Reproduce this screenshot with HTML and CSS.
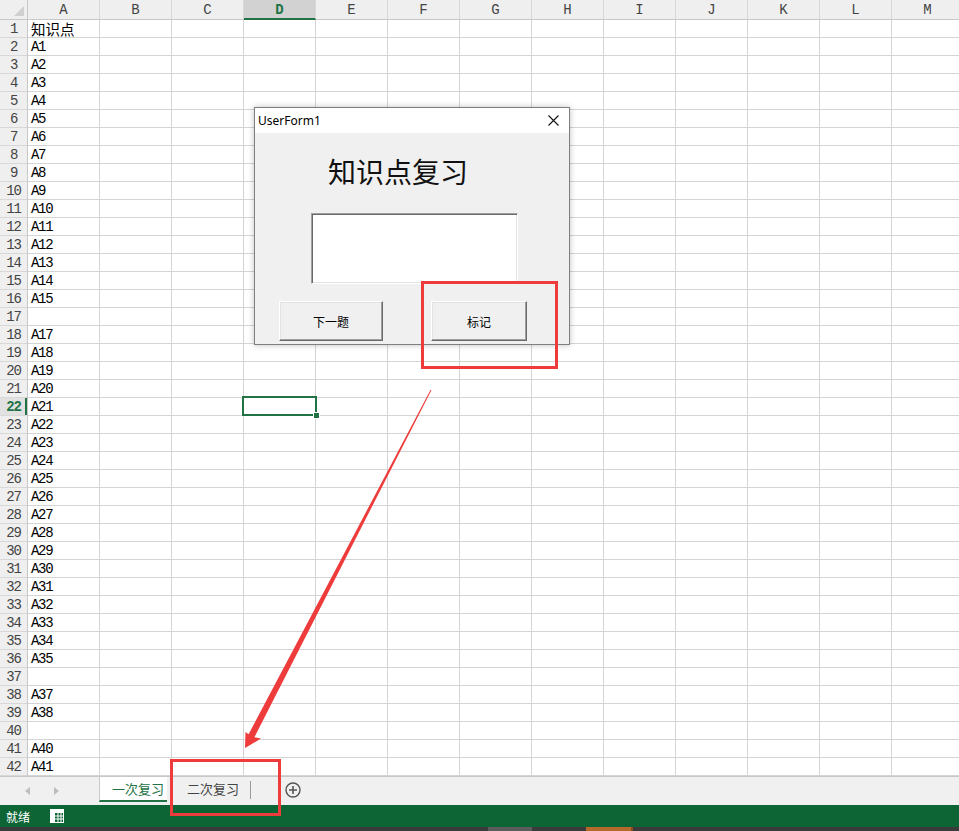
FILE: index.html
```html
<!DOCTYPE html>
<html lang="zh">
<head>
<meta charset="utf-8">
<title>Excel</title>
<link rel="stylesheet" href="styles.css">
</head>
<body>
<div class="sheet">
  <div class="corner"><span class="corner-tri"></span></div>
  <div class="colheads">
    <div class="colh">A</div><div class="colh">B</div><div class="colh">C</div><div class="colh colh-act">D</div><div class="colh">E</div><div class="colh">F</div><div class="colh">G</div><div class="colh">H</div><div class="colh">I</div><div class="colh">J</div><div class="colh">K</div><div class="colh">L</div><div class="colh">M</div>
  </div>
  <div class="rows">
    <div class="rowh">1</div><div class="rowh">2</div><div class="rowh">3</div><div class="rowh">4</div><div class="rowh">5</div><div class="rowh">6</div><div class="rowh">7</div><div class="rowh">8</div><div class="rowh">9</div><div class="rowh">10</div>
    <div class="rowh">11</div><div class="rowh">12</div><div class="rowh">13</div><div class="rowh">14</div><div class="rowh">15</div><div class="rowh">16</div><div class="rowh">17</div><div class="rowh">18</div><div class="rowh">19</div><div class="rowh">20</div>
    <div class="rowh">21</div><div class="rowh rowh-act">22</div><div class="rowh">23</div><div class="rowh">24</div><div class="rowh">25</div><div class="rowh">26</div><div class="rowh">27</div><div class="rowh">28</div><div class="rowh">29</div><div class="rowh">30</div>
    <div class="rowh">31</div><div class="rowh">32</div><div class="rowh">33</div><div class="rowh">34</div><div class="rowh">35</div><div class="rowh">36</div><div class="rowh">37</div><div class="rowh">38</div><div class="rowh">39</div><div class="rowh">40</div>
    <div class="rowh">41</div><div class="rowh">42</div>
  </div>
  <div class="grid">
    <div class="colA">
      <div class="cell cjk">知识点</div>
      <div class="cell">A1</div><div class="cell">A2</div><div class="cell">A3</div><div class="cell">A4</div><div class="cell">A5</div><div class="cell">A6</div><div class="cell">A7</div><div class="cell">A8</div><div class="cell">A9</div><div class="cell">A10</div>
      <div class="cell">A11</div><div class="cell">A12</div><div class="cell">A13</div><div class="cell">A14</div><div class="cell">A15</div><div class="cell"></div><div class="cell">A17</div><div class="cell">A18</div><div class="cell">A19</div><div class="cell">A20</div>
      <div class="cell">A21</div><div class="cell">A22</div><div class="cell">A23</div><div class="cell">A24</div><div class="cell">A25</div><div class="cell">A26</div><div class="cell">A27</div><div class="cell">A28</div><div class="cell">A29</div><div class="cell">A30</div>
      <div class="cell">A31</div><div class="cell">A32</div><div class="cell">A33</div><div class="cell">A34</div><div class="cell">A35</div><div class="cell"></div><div class="cell">A37</div><div class="cell">A38</div><div class="cell"></div><div class="cell">A40</div>
      <div class="cell">A41</div>
    </div>
    <div class="sel"></div>
  </div>
</div>

<div class="tabbar">
  <div class="tabnav">
    <span class="tri tri-l"></span>
    <span class="tri tri-r"></span>
  </div>
  <div class="tab tab-act">一次复习</div>
  <div class="tab">二次复习</div>
  <div class="tabsep"></div>
  <svg class="addsheet" width="16" height="16" viewBox="0 0 16 16"><circle cx="8" cy="8" r="7" fill="none" stroke="#555" stroke-width="1.4"/><path d="M8 4v8M4 8h8" stroke="#555" stroke-width="1.6"/></svg>
</div>

<div class="status">
  <span class="status-text">就绪</span>
  <svg class="status-icon" width="14" height="14" viewBox="0 0 14 14"><rect x="0.5" y="0.5" width="13" height="13" fill="none" stroke="#fff"/><rect x="1" y="1" width="12" height="3" fill="#fff"/><rect x="1" y="1" width="4" height="12" fill="#fff"/><path d="M5 7h8M5 10h8M8 4v9M11 4v9" stroke="#fff" stroke-width="1"/></svg>
</div>

<div class="taskbar">
  <span class="tb-a"></span>
  <span class="tb-b"></span>
  <span class="tb-c"></span>
</div>

<div class="dialog">
  <div class="dlg-title">
    <span class="dlg-name">UserForm1</span>
    <svg class="dlg-close" width="11" height="11" viewBox="0 0 11 11"><path d="M0.5 0.5l10 10M10.5 0.5l-10 10" stroke="#111" stroke-width="1.1"/></svg>
  </div>
  <div class="dlg-body">
    <div class="dlg-head">知识点复习</div>
    <div class="dlg-text"></div>
    <div class="dlg-btns">
      <div class="btn btn-next">下一题</div>
      <div class="btn btn-mark">标记</div>
    </div>
  </div>
</div>

<svg class="annot" width="959" height="831" viewBox="0 0 959 831">
  <rect x="422.5" y="282.5" width="134" height="85" fill="none" stroke="#ee3b3b" stroke-width="3"/>
  <rect x="171.5" y="760.5" width="108" height="54" fill="none" stroke="#ee3b3b" stroke-width="3"/>
  <polygon points="430.6,389.8 431.4,390.2 254.4,737.2 261,738.5 245,748 245.5,732 248.6,734.2" fill="#ee3b3b"/>
</svg>
</body>
</html>
```

FILE: styles.css
```css
html, body {
  margin: 0;
  padding: 0;
}
body {
  width: 959px;
  height: 831px;
  overflow: hidden;
  position: relative;
  background: #fff;
  font-family: "Liberation Mono", monospace;
}

/* ---------- sheet ---------- */
.sheet {
  display: grid;
  grid-template-columns: 28px 931px;
  grid-template-rows: 20px 756px;
  height: 776px;
  overflow: hidden;
}
.corner {
  position: relative;
  box-sizing: border-box;
  background: #efefef;
  border-right: 1px solid #c8c8c8;
  border-bottom: 1px solid #c8c8c8;
}
.corner-tri {
  position: absolute;
  right: 3px;
  bottom: 3px;
  width: 0;
  height: 0;
  border-left: 10px solid transparent;
  border-bottom: 10px solid #cfcfcf;
}
.colheads {
  display: flex;
  overflow: hidden;
  background: #efefef;
}
.colh {
  flex: 0 0 72px;
  box-sizing: border-box;
  height: 20px;
  border-right: 1px solid #d8d8d8;
  border-bottom: 1px solid #c8c8c8;
  text-align: center;
  font-size: 14px;
  line-height: 21px;
  color: #444;
}
.colh-act {
  background: #d2d2d2;
  color: #217346;
  font-weight: bold;
  border-bottom: 2px solid #217346;
}
.rows {
  box-sizing: border-box;
  background: #efefef;
  border-right: 1px solid #c8c8c8;
}
.rowh {
  box-sizing: border-box;
  height: 18px;
  padding-top: 1px;
  border-bottom: 1px solid #d8d8d8;
  text-align: center;
  font-size: 14px;
  line-height: 17px;
  letter-spacing: -1.2px;
  color: #444;
}
.rowh-act {
  background: #e1e1e1;
  color: #217346;
  font-weight: bold;
  box-shadow: inset -2px 0 0 #217346;
}
.grid {
  position: relative;
  background-image:
    repeating-linear-gradient(to right, transparent 0 71px, #d4d4d4 71px 72px),
    repeating-linear-gradient(to bottom, transparent 0 17px, #d4d4d4 17px 18px);
}
.colA {
  display: flex;
  flex-direction: column;
  width: 71px;
}
.cell {
  height: 18px;
  box-sizing: border-box;
  padding-left: 3px;
  padding-top: 1px;
  font-size: 14px;
  line-height: 17px;
  letter-spacing: -1.3px;
  color: #000;
  white-space: nowrap;
}
.cell.cjk {
  font-family: "Noto Sans CJK SC", sans-serif;
  font-size: 14.5px;
  letter-spacing: 0;
  padding-top: 0;
  line-height: 17px;
}
.sel {
  position: absolute;
  left: 214px;
  top: 376px;
  width: 71px;
  height: 16px;
  border: 2px solid #217346;
}
.sel::after {
  content: "";
  position: absolute;
  right: -5px;
  bottom: -5px;
  width: 5px;
  height: 5px;
  background: #217346;
  border: 1px solid #fff;
}

/* ---------- tab bar ---------- */
.tabbar {
  box-sizing: border-box;
  height: 29px;
  border-top: 1px solid #c8c8c8;
  background: #f0f0f0;
  display: flex;
  align-items: flex-start;
  font-family: "Noto Sans CJK SC", sans-serif;
  font-size: 13px;
}
.tabnav {
  width: 99px;
  height: 28px;
  display: flex;
  align-items: center;
}
.tri {
  width: 0;
  height: 0;
  border-top: 4px solid transparent;
  border-bottom: 4px solid transparent;
}
.tri-l {
  margin-left: 25px;
  border-right: 5px solid #bdbdbd;
}
.tri-r {
  margin-left: 24px;
  border-left: 5px solid #bdbdbd;
}
.tab {
  box-sizing: border-box;
  height: 25px;
  line-height: 23px;
  padding-left: 20px;
  width: 83px;
  color: #444;
}
.tab-act {
  width: 68px;
  padding-left: 12px;
  background: #fff;
  color: #217346;
  border-left: 1px solid #c8c8c8;
  border-bottom: 2px solid #217346;
}
.tabsep {
  width: 1px;
  height: 18px;
  margin-top: 4px;
  background: #9a9a9a;
}
.addsheet {
  margin-left: 34px;
  margin-top: 5px;
}

/* ---------- status bar ---------- */
.status {
  height: 22px;
  background: #0d6434;
  display: flex;
  align-items: center;
  font-family: "Noto Sans CJK SC", sans-serif;
  font-size: 12px;
  color: #fff;
}
.status-text {
  margin-left: 6px;
}
.status-icon {
  margin-left: 20px;
}
.taskbar {
  height: 4px;
  background: #3b3b3b;
  display: flex;
}
.tb-a {
  margin-left: 488px;
  width: 44px;
  background: #5c5c5c;
}
.tb-b {
  margin-left: 54px;
  width: 45px;
  background: #b56a2b;
}
.tb-c {
  width: 2px;
  background: #8b4c1e;
}

/* ---------- dialog ---------- */
.dialog {
  position: absolute;
  left: 254px;
  top: 107px;
  width: 316px;
  height: 238px;
  box-sizing: border-box;
  border: 1px solid #7f7f7f;
  background: #f0f0f0;
  box-shadow: 0 0 6px rgba(0, 0, 0, 0.25);
}
.dlg-title {
  height: 25px;
  background: #fff;
  display: flex;
  align-items: center;
  font-family: "Noto Sans", sans-serif;
  font-size: 12px;
  color: #000;
}
.dlg-name {
  margin-left: 3px;
}
.dlg-close {
  margin-left: auto;
  margin-right: 10px;
}
.dlg-body {
  display: flex;
  flex-direction: column;
  align-items: flex-start;
}
.dlg-head {
  margin-top: 24px;
  margin-left: 73px;
  font-family: "Noto Sans CJK SC", sans-serif;
  font-size: 28px;
  line-height: 28px;
  color: #111;
}
.dlg-text {
  margin-top: 28px;
  margin-left: 56px;
  width: 207px;
  height: 71px;
  box-sizing: border-box;
  background: #fff;
  border: 1px solid;
  border-color: #a0a0a0 #fff #fff #a0a0a0;
  box-shadow: inset 1px 1px 0 #696969, inset -1px -1px 0 #e3e3e3;
}
.dlg-btns {
  margin-top: 17px;
  display: flex;
}
.btn {
  box-sizing: border-box;
  height: 40px;
  display: flex;
  align-items: center;
  justify-content: center;
  background: #f0f0f0;
  border: 1px solid;
  border-color: #fff #696969 #696969 #fff;
  box-shadow: inset -1px -1px 0 #a0a0a0, inset 1px 1px 0 #e3e3e3;
  font-family: "Noto Sans CJK SC", sans-serif;
  font-size: 12px;
  color: #000;
}
.btn-next {
  margin-left: 24px;
  width: 104px;
}
.btn-mark {
  margin-left: 48px;
  width: 96px;
}

/* ---------- annotations ---------- */
.annot {
  position: absolute;
  left: 0;
  top: 0;
  pointer-events: none;
}
```
